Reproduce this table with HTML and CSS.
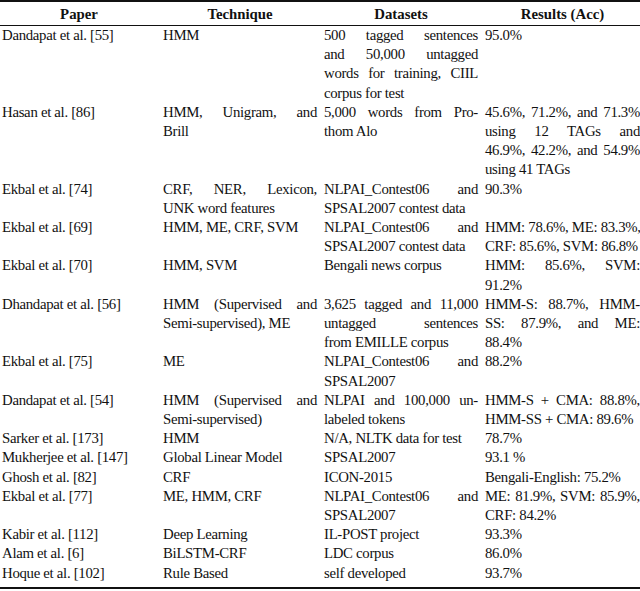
FILE: index.html
```html
<!DOCTYPE html>
<html>
<head>
<meta charset="utf-8">
<link rel="stylesheet" href="styles.css">
</head>
<body>
<div class="table">
  <div class="row head">
    <div class="cell">Paper</div>
    <div class="cell">Technique</div>
    <div class="cell">Datasets</div>
    <div class="cell">Results (Acc)</div>
  </div>
  <div class="body">
    <div class="row">
      <div class="cell"><div class="ln">Dandapat et al. [55]</div></div>
      <div class="cell"><div class="ln">HMM</div></div>
      <div class="cell"><div class="ln j">500 tagged sentences</div><div class="ln j">and 50,000 untagged</div><div class="ln j">words for training, CIIL</div><div class="ln">corpus for test</div></div>
      <div class="cell"><div class="ln">95.0%</div></div>
    </div>
    <div class="row">
      <div class="cell"><div class="ln">Hasan et al. [86]</div></div>
      <div class="cell"><div class="ln j">HMM, Unigram, and</div><div class="ln">Brill</div></div>
      <div class="cell"><div class="ln j">5,000 words from Pro-</div><div class="ln">thom Alo</div></div>
      <div class="cell"><div class="ln j">45.6%, 71.2%, and 71.3%</div><div class="ln j">using 12 TAGs and</div><div class="ln j">46.9%, 42.2%, and 54.9%</div><div class="ln">using 41 TAGs</div></div>
    </div>
    <div class="row">
      <div class="cell"><div class="ln">Ekbal et al. [74]</div></div>
      <div class="cell"><div class="ln j">CRF, NER, Lexicon,</div><div class="ln">UNK word features</div></div>
      <div class="cell"><div class="ln j">NLPAI_Contest06 and</div><div class="ln">SPSAL2007 contest data</div></div>
      <div class="cell"><div class="ln">90.3%</div></div>
    </div>
    <div class="row">
      <div class="cell"><div class="ln">Ekbal et al. [69]</div></div>
      <div class="cell"><div class="ln">HMM, ME, CRF, SVM</div></div>
      <div class="cell"><div class="ln j">NLPAI_Contest06 and</div><div class="ln">SPSAL2007 contest data</div></div>
      <div class="cell"><div class="ln j">HMM: 78.6%, ME: 83.3%,</div><div class="ln">CRF: 85.6%, SVM: 86.8%</div></div>
    </div>
    <div class="row">
      <div class="cell"><div class="ln">Ekbal et al. [70]</div></div>
      <div class="cell"><div class="ln">HMM, SVM</div></div>
      <div class="cell"><div class="ln">Bengali news corpus</div></div>
      <div class="cell"><div class="ln j">HMM: 85.6%, SVM:</div><div class="ln">91.2%</div></div>
    </div>
    <div class="row">
      <div class="cell"><div class="ln">Dhandapat et al. [56]</div></div>
      <div class="cell"><div class="ln j">HMM (Supervised and</div><div class="ln">Semi-supervised), ME</div></div>
      <div class="cell"><div class="ln j">3,625 tagged and 11,000</div><div class="ln j">untagged sentences</div><div class="ln">from EMILLE corpus</div></div>
      <div class="cell"><div class="ln j">HMM-S: 88.7%, HMM-</div><div class="ln j">SS: 87.9%, and ME:</div><div class="ln">88.4%</div></div>
    </div>
    <div class="row">
      <div class="cell"><div class="ln">Ekbal et al. [75]</div></div>
      <div class="cell"><div class="ln">ME</div></div>
      <div class="cell"><div class="ln j">NLPAI_Contest06 and</div><div class="ln">SPSAL2007</div></div>
      <div class="cell"><div class="ln">88.2%</div></div>
    </div>
    <div class="row">
      <div class="cell"><div class="ln">Dandapat et al. [54]</div></div>
      <div class="cell"><div class="ln j">HMM (Supervised and</div><div class="ln">Semi-supervised)</div></div>
      <div class="cell"><div class="ln j">NLPAI and 100,000 un-</div><div class="ln">labeled tokens</div></div>
      <div class="cell"><div class="ln j">HMM-S + CMA: 88.8%,</div><div class="ln">HMM-SS + CMA: 89.6%</div></div>
    </div>
    <div class="row">
      <div class="cell"><div class="ln">Sarker et al. [173]</div></div>
      <div class="cell"><div class="ln">HMM</div></div>
      <div class="cell"><div class="ln">N/A, NLTK data for test</div></div>
      <div class="cell"><div class="ln">78.7%</div></div>
    </div>
    <div class="row">
      <div class="cell"><div class="ln">Mukherjee et al. [147]</div></div>
      <div class="cell"><div class="ln">Global Linear Model</div></div>
      <div class="cell"><div class="ln">SPSAL2007</div></div>
      <div class="cell"><div class="ln">93.1 %</div></div>
    </div>
    <div class="row">
      <div class="cell"><div class="ln">Ghosh et al. [82]</div></div>
      <div class="cell"><div class="ln">CRF</div></div>
      <div class="cell"><div class="ln">ICON-2015</div></div>
      <div class="cell"><div class="ln">Bengali-English: 75.2%</div></div>
    </div>
    <div class="row">
      <div class="cell"><div class="ln">Ekbal et al. [77]</div></div>
      <div class="cell"><div class="ln">ME, HMM, CRF</div></div>
      <div class="cell"><div class="ln j">NLPAI_Contest06 and</div><div class="ln">SPSAL2007</div></div>
      <div class="cell"><div class="ln j">ME: 81.9%, SVM: 85.9%,</div><div class="ln">CRF: 84.2%</div></div>
    </div>
    <div class="row">
      <div class="cell"><div class="ln">Kabir et al. [112]</div></div>
      <div class="cell"><div class="ln">Deep Learning</div></div>
      <div class="cell"><div class="ln">IL-POST project</div></div>
      <div class="cell"><div class="ln">93.3%</div></div>
    </div>
    <div class="row">
      <div class="cell"><div class="ln">Alam et al. [6]</div></div>
      <div class="cell"><div class="ln">BiLSTM-CRF</div></div>
      <div class="cell"><div class="ln">LDC corpus</div></div>
      <div class="cell"><div class="ln">86.0%</div></div>
    </div>
    <div class="row">
      <div class="cell"><div class="ln">Hoque et al. [102]</div></div>
      <div class="cell"><div class="ln">Rule Based</div></div>
      <div class="cell"><div class="ln">self developed</div></div>
      <div class="cell"><div class="ln">93.7%</div></div>
    </div>
  </div>
</div>
</body>
</html>
```

FILE: styles.css
```css
html, body {
  margin: 0;
  padding: 0;
  background: #fff;
}
body {
  font-family: "Liberation Serif", "DejaVu Serif", serif;
  font-size: 14.8px;
  letter-spacing: -0.3px;
  color: #111;
}
.table {
  width: 640px;
  border-top: 2px solid #111;
  border-bottom: 2.5px solid #111;
  padding-bottom: 4px;
}
.row {
  display: grid;
  grid-template-columns: 154px 154px 154px 155px;
  column-gap: 7px;
  padding-left: 2px;
}
.head {
  height: 23px;
  align-items: center;
  border-bottom: 1px solid #111;
  font-weight: bold;
  text-align: center;
  line-height: 19px;
  letter-spacing: 0;
}
.head .cell {
  padding-top: 2px;
}
.ln {
  line-height: 19.2px;
  white-space: nowrap;
}
.ln.j {
  text-align: justify;
  text-align-last: justify;
}
```
